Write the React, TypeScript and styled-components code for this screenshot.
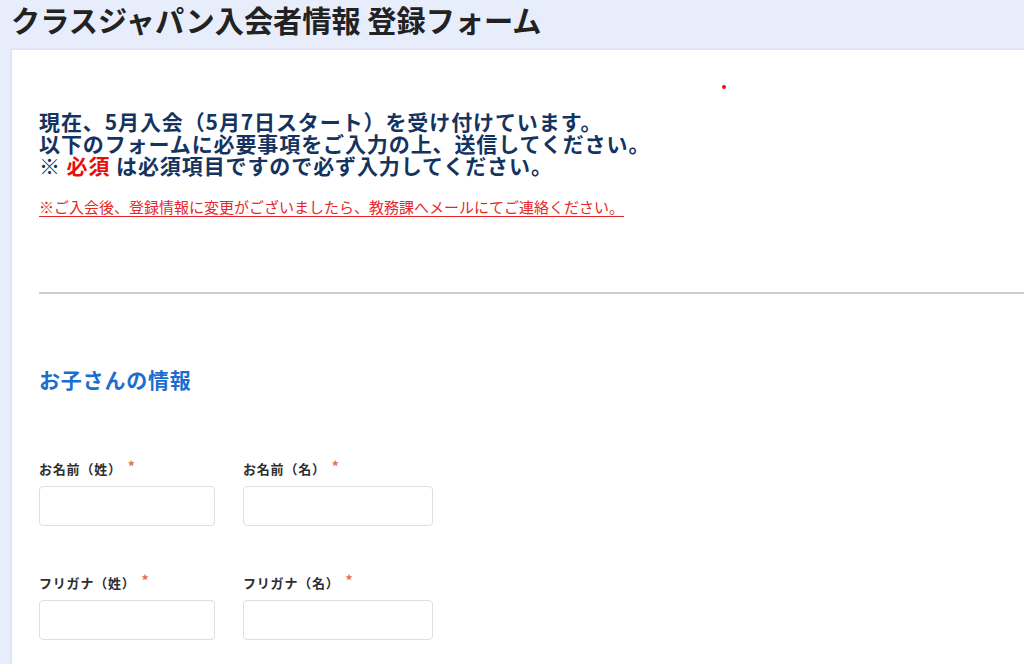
import React from 'react';
import styled, { createGlobalStyle } from 'styled-components';

const GlobalStyle = createGlobalStyle`
  html, body {
    margin: 0;
    padding: 0;
    overflow: hidden;
    background: #e8edfb;
    font-family: "Noto Sans CJK JP", "Noto Sans", sans-serif;
  }
`;

const Page = styled.div`
  min-height: 664px;
`;

const Title = styled.h1`
  margin: 0;
  padding-left: 11px;
  font-size: 29.2px;
  line-height: 38px;
  font-weight: 700;
  color: #222;
`;

const Card = styled.div`
  position: relative;
  margin: 11px 0 0 11px;
  width: 1100px;
  min-height: 640px;
  box-sizing: border-box;
  padding: 60px 27px 0;
  background: #fff;
  border: 1px solid #dfe3ec;
  box-shadow: 0 0 2px rgba(0, 0, 0, 0.06);
`;

const Dot = styled.span`
  position: absolute;
  left: 710px;
  top: 35px;
  width: 4px;
  height: 4px;
  border-radius: 50%;
  background: #f01010;
`;

const Intro = styled.div`
  display: flex;
  flex-direction: column;
  font-size: 21px;
  letter-spacing: 0.9px;
  font-weight: 700;
  color: #14345f;
`;

const IntroLine = styled.div`
  height: 22px;
  line-height: 22px;
  white-space: nowrap;
`;

const Required = styled.span`
  display: inline-block;
  line-height: 22px;
  color: #e50f0f;
`;

const Note = styled.p`
  margin: 21px 0 0;
  font-size: 15px;
  line-height: 20px;
  color: #e8262a;
  text-decoration: underline;
  text-underline-offset: 3px;
`;

const Divider = styled.hr`
  margin: 75px 0 0;
  border: none;
  border-top: 2px solid #cdcdcd;
`;

const SectionTitle = styled.h2`
  margin: 70px 0 0;
  font-size: 21px;
  line-height: 30px;
  letter-spacing: 0.8px;
  font-weight: 700;
  color: #1b6dcf;
`;

const FieldGrid = styled.div`
  display: grid;
  grid-template-columns: 176px 190px;
  column-gap: 28px;
  row-gap: 47px;
  margin-top: 65px;
`;

const Field = styled.div`
  display: flex;
  flex-direction: column;
  gap: 7px;
`;

const Label = styled.label`
  display: flex;
  align-items: flex-start;
  font-size: 13px;
  line-height: 20px;
  letter-spacing: 0.8px;
  font-weight: 700;
  color: #2e2e2e;
`;

const Star = styled.span`
  margin-left: 6px;
  font-size: 14px;
  line-height: 14px;
  color: #e2704c;
`;

const Input = styled.input`
  width: 100%;
  height: 40px;
  box-sizing: border-box;
  border: 1px solid #dedede;
  border-radius: 4px;
  background: #fff;
  outline: none;
`;

const fields = ['お名前（姓）', 'お名前（名）', 'フリガナ（姓）', 'フリガナ（名）'];

export default function App() {
  return (
    <Page>
      <GlobalStyle />
      <Title>クラスジャパン入会者情報 登録フォーム</Title>
      <Card>
        <Dot />
        <Intro>
          <IntroLine>現在、5月入会（5月7日スタート）を受け付けています。</IntroLine>
          <IntroLine>以下のフォームに必要事項をご入力の上、送信してください。</IntroLine>
          <IntroLine>
            ※ <Required>必須</Required> は必須項目ですので必ず入力してください。
          </IntroLine>
        </Intro>
        <Note>※ご入会後、登録情報に変更がございましたら、教務課へメールにてご連絡ください。</Note>
        <Divider />
        <SectionTitle>お子さんの情報</SectionTitle>
        <FieldGrid>
          {fields.map(f => (
            <Field key={f}>
              <Label>
                {f}
                <Star>*</Star>
              </Label>
              <Input type="text" />
            </Field>
          ))}
        </FieldGrid>
      </Card>
    </Page>
  );
}
